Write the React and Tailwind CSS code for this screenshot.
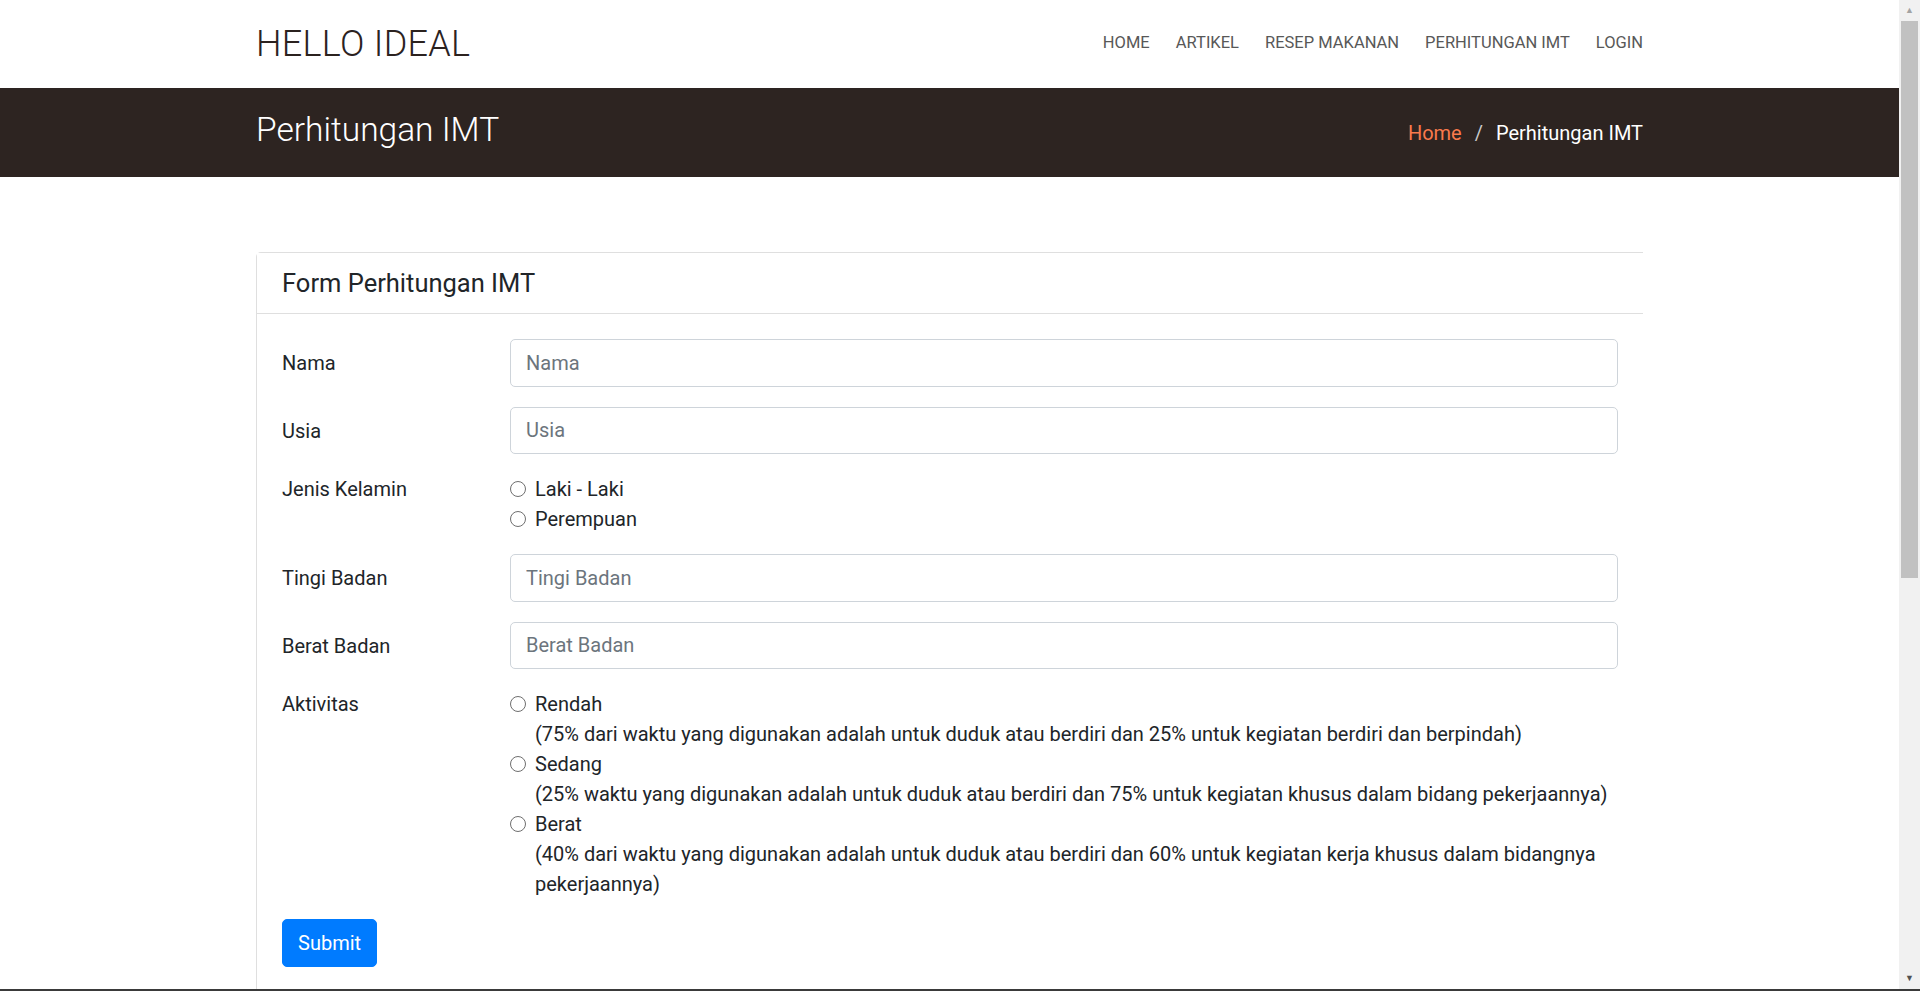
import { useState } from "react";

const font = { fontFamily: 'Roboto, "Noto Sans", sans-serif' };

const navLinks = ["HOME", "ARTIKEL", "RESEP MAKANAN", "PERHITUNGAN IMT", "LOGIN"];

function TextField({ label, placeholder }) {
  return (
    <div className="flex mb-[20px]">
      <label className="w-[228px] shrink-0 text-[20px] leading-[30px] pt-[9px] text-[#212529]">{label}</label>
      <input
        type="text"
        placeholder={placeholder}
        className="flex-1 h-[47.5px] px-[15px] text-[20px] border border-[#ced4da] rounded-[5px] text-[#495057] placeholder:text-[#6c757d] outline-none"
      />
    </div>
  );
}

function Radio({ name, value, checked, onChange, children }) {
  return (
    <label className="relative block pl-[25px] text-[20px] leading-[30px] text-[#212529]">
      <input
        type="radio"
        name={name}
        checked={checked}
        onChange={() => onChange(value)}
        className="absolute left-0 top-[7px] w-[16px] h-[16px] appearance-none rounded-full border border-[#6f6f6f] bg-white checked:border-[5px] checked:border-[#0075ff]"
      />
      {children}
    </label>
  );
}

export default function App() {
  const [gender, setGender] = useState("");
  const [aktivitas, setAktivitas] = useState("");

  return (
    <div className="h-screen flex flex-col overflow-hidden bg-white" style={font}>
      <div className="flex flex-1 min-h-0">
        <div className="flex-1 overflow-hidden">
          {/* navbar */}
          <nav className="h-[88px]">
            <div className="w-[1425px] mx-auto px-[19px] h-full flex items-center justify-between">
              <a className="text-[36px] font-light text-[#2b221f] tracking-[0.3px] leading-none">HELLO IDEAL</a>
              <ul className="flex items-center gap-[26px] pb-[2px]">
                {navLinks.map((l) => (
                  <li key={l} className="text-[16.5px] text-[#585858]">{l}</li>
                ))}
              </ul>
            </div>
          </nav>

          {/* page title band */}
          <div className="h-[89px] bg-[#2d2421]">
            <div className="w-[1425px] mx-auto px-[19px] h-full flex items-center justify-between">
              <h1 className="text-[33.5px] font-light text-white leading-none pb-[5px]">Perhitungan IMT</h1>
              <div className="flex items-center text-[20px] text-white">
                <span className="text-[#fa7a4c]">Home</span>
                <span className="px-[13px] text-[#c9c9c9]">/</span>
                <span>Perhitungan IMT</span>
              </div>
            </div>
          </div>

          {/* form card */}
          <div className="w-[1425px] mx-auto px-[19px] pt-[75px]">
            <div className="border border-r-0 border-[#dfdfdf] rounded-tl-[5px]">
              <div className="px-[25px] py-[15px] border-b border-[#dfdfdf] bg-white">
                <h5 className="text-[25.5px] font-normal leading-[30px] text-[#212529]">Form Perhitungan IMT</h5>
              </div>
              <form className="p-[25px] w-[1386px]" onSubmit={(e) => e.preventDefault()}>
                <TextField label="Nama" placeholder="Nama" />
                <TextField label="Usia" placeholder="Usia" />

                <div className="flex mb-[20px]">
                  <label className="w-[228px] shrink-0 text-[20px] leading-[30px] text-[#212529]">Jenis Kelamin</label>
                  <div className="flex-1">
                    <Radio name="jk" value="L" checked={gender === "L"} onChange={setGender}>Laki - Laki</Radio>
                    <Radio name="jk" value="P" checked={gender === "P"} onChange={setGender}>Perempuan</Radio>
                  </div>
                </div>

                <TextField label="Tingi Badan" placeholder="Tingi Badan" />
                <TextField label="Berat Badan" placeholder="Berat Badan" />

                <div className="flex mb-[20px]">
                  <label className="w-[228px] shrink-0 text-[20px] leading-[30px] text-[#212529]">Aktivitas</label>
                  <div className="flex-1 whitespace-nowrap">
                    <Radio name="akt" value="rendah" checked={aktivitas === "rendah"} onChange={setAktivitas}>
                      Rendah
                      <br />
                      (75% dari waktu yang digunakan adalah untuk duduk atau berdiri dan 25% untuk kegiatan berdiri dan berpindah)
                    </Radio>
                    <Radio name="akt" value="sedang" checked={aktivitas === "sedang"} onChange={setAktivitas}>
                      Sedang
                      <br />
                      (25% waktu yang digunakan adalah untuk duduk atau berdiri dan 75% untuk kegiatan khusus dalam bidang pekerjaannya)
                    </Radio>
                    <Radio name="akt" value="berat" checked={aktivitas === "berat"} onChange={setAktivitas}>
                      Berat
                      <br />
                      (40% dari waktu yang digunakan adalah untuk duduk atau berdiri dan 60% untuk kegiatan kerja khusus dalam bidangnya
                      <br />
                      pekerjaannya)
                    </Radio>
                  </div>
                </div>

                <button type="submit" className="h-[47.5px] px-[15px] text-[20px] text-white bg-[#007bff] border border-[#007bff] rounded-[5px]">
                  Submit
                </button>
              </form>
            </div>
          </div>
        </div>

        {/* scrollbar */}
        <div className="w-[21px] shrink-0 bg-[#f1f1f1] flex flex-col items-center">
          <div className="h-[21px] flex items-center justify-center text-[9px] text-[#a3a3a3]">▲</div>
          <div className="w-[17px] h-[557px] bg-[#c1c1c1]" />
          <div className="flex-1" />
          <div className="h-[21px] flex items-center justify-center text-[9px] text-[#505050]">▼</div>
        </div>
      </div>
      <div className="h-[2px] bg-[#3a3a3a] shrink-0" />
    </div>
  );
}
